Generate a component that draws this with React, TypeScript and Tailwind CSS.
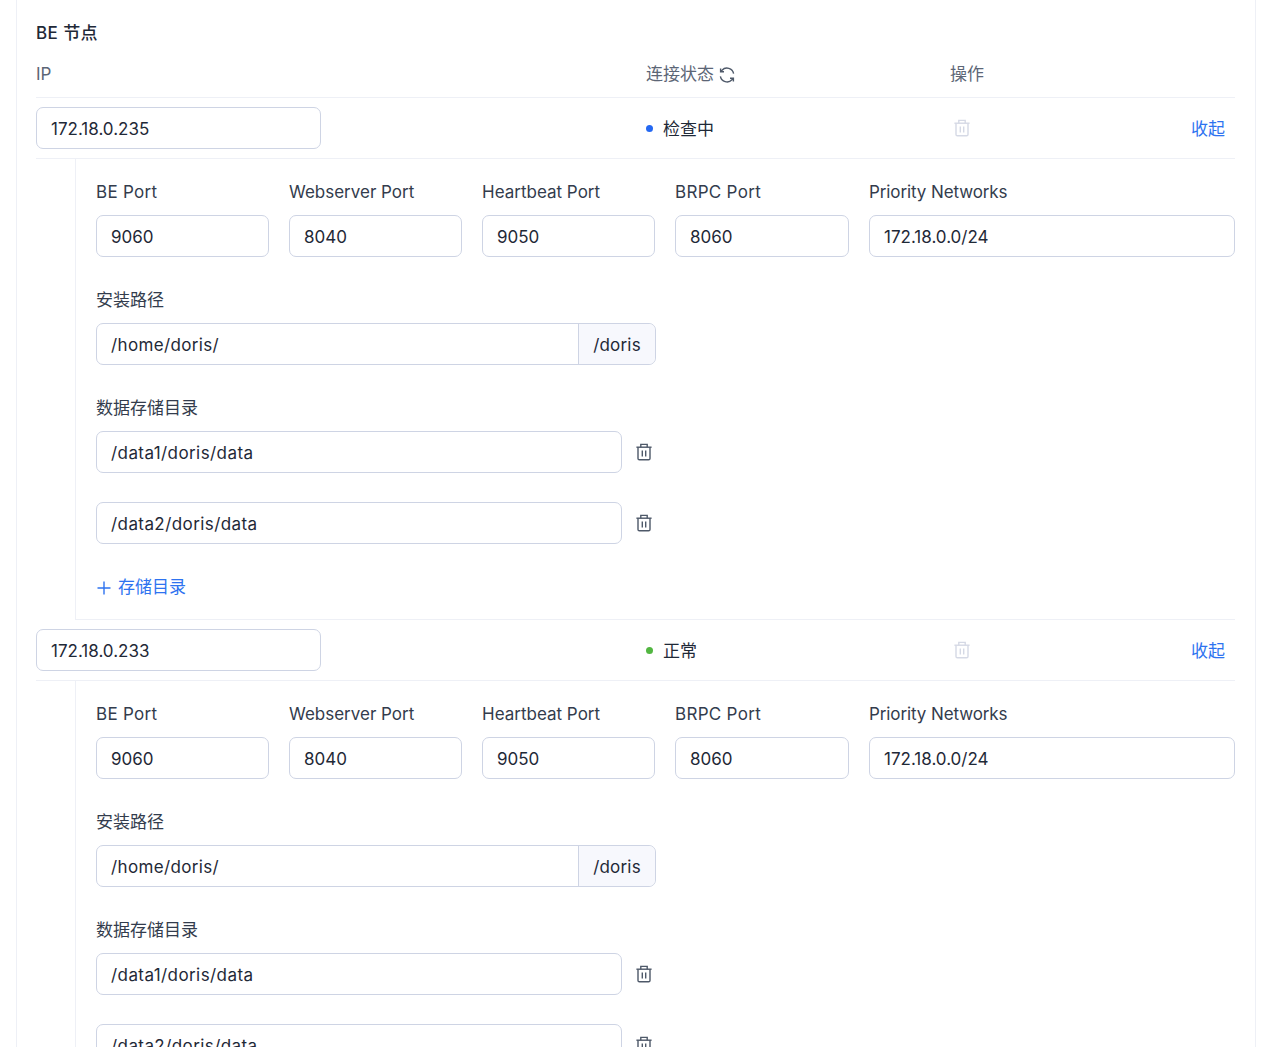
const fontStack = { fontFamily: 'Inter, "Noto Sans CJK SC", sans-serif' }

function TrashIcon({ className }: { className: string }) {
  return (
    <svg viewBox="0 0 16 18" fill="none" stroke="currentColor" strokeWidth="1.4" className={className}>
      <path d="M0.4 4.2h15.2" />
      <path d="M4.8 4.2V1.4h6.4v2.8" />
      <path d="M2 4.2v11.2c0 .9.5 1.4 1.4 1.4h9.2c.9 0 1.4-.5 1.4-1.4V4.2" />
      <path d="M6.3 7.6v5.8M9.7 7.6v5.8" />
    </svg>
  )
}

function RefreshIcon() {
  return (
    <svg viewBox="0 0 16 16" fill="none" stroke="currentColor" strokeWidth="1.4" className="h-4 w-4 text-[#4e5969]">
      <path d="M14.6 6.6A6.8 6.8 0 0 0 3 3.2L1.6 4.6" />
      <path d="M1.6 1.4v3.4h3.4" />
      <path d="M1.4 9.4A6.8 6.8 0 0 0 13 12.8l1.4-1.4" />
      <path d="M14.4 14.6v-3.4H11" />
    </svg>
  )
}

function Field({ value, className = '' }: { value: string; className?: string }) {
  return (
    <div className={`flex h-[42px] items-center rounded-[7px] border border-[#ced4e4] bg-white px-3.5 pt-[3px] text-[17px] text-[#1f2937] ${className}`}>
      {value}
    </div>
  )
}

function Label({ children, className = '' }: { children: string; className?: string }) {
  return <div className={`mb-[11px] h-[24px] text-[17px] leading-[25px] text-[#333c4d] ${className}`}>{children}</div>
}

function DataDir({ value }: { value: string }) {
  return (
    <div className="flex items-center">
      <Field value={value} className="w-[526px] tracking-[0.42px]" />
      <TrashIcon className="ml-[14px] h-[18px] w-4 text-[#4e5969]" />
    </div>
  )
}

function NodeRow({ ip, status, dot }: { ip: string; status: string; dot: string }) {
  return (
    <>
      <div className="grid grid-cols-[610px_304px_1fr] items-center border-b border-[#eef0f6] py-[9px]">
        <Field value={ip} className="w-[285px]" />
        <div className="flex items-center text-[17px] text-[#1f2937]">
          <span className={`mr-[10px] h-[7px] w-[7px] rounded-full ${dot}`} />
          <span className="pt-[3px]">{status}</span>
        </div>
        <div className="flex items-center justify-between pr-[10px]">
          <TrashIcon className="ml-[4px] h-[18px] w-4 text-[#d5d9e5]" />
          <span className="pt-[3px] text-[17px] text-[#2e73f0]">收起</span>
        </div>
      </div>
      <div className="ml-[39px] border-b border-l border-[#eef0f6] pl-5 pt-[21px]">
        <div className="grid grid-cols-[173px_173px_173px_174px_1fr] gap-x-5">
          {[
            ['BE Port', '9060', 'tracking-[0.3px]'],
            ['Webserver Port', '8040', ''],
            ['Heartbeat Port', '9050', ''],
            ['BRPC Port', '8060', 'tracking-[0.3px]'],
            ['Priority Networks', '172.18.0.0/24', 'tracking-[-0.1px]'],
          ].map(([label, value, tracking]) => (
            <div key={label}>
              <Label className={tracking}>{label}</Label>
              <Field value={value} />
            </div>
          ))}
        </div>
        <div className="mt-[31px]">
          <Label>安装路径</Label>
          <div className="flex h-[42px] w-[560px] rounded-[7px] border border-[#ced4e4] text-[17px] text-[#1f2937]">
            <div className="flex flex-1 items-center px-3.5 pt-[3px] tracking-[0.35px]">/home/doris/</div>
            <div className="flex w-[77px] items-center justify-center rounded-r-[7px] border-l border-[#ced4e4] bg-[#f7f8fd] pt-[3px] tracking-[0.2px]">/doris</div>
          </div>
        </div>
        <div className="mt-[31px]">
          <Label>数据存储目录</Label>
          <div className="flex flex-col gap-[29px]">
            <DataDir value="/data1/doris/data" />
            <DataDir value="/data2/doris/data" />
          </div>
          <div className="mt-[31px] flex h-[24px] items-center pt-[2px] text-[17px] text-[#2e73f0]">
            <svg viewBox="0 0 16 16" fill="none" stroke="currentColor" strokeWidth="1.4" className="mr-[6px] h-4 w-4">
              <path d="M8 1.5v13M1.5 8h13" />
            </svg>
            存储目录
          </div>
        </div>
        <div className="h-[20px]" />
      </div>
    </>
  )
}

export default function App() {
  return (
    <div className="h-screen overflow-hidden bg-white" style={fontStack}>
      <div className="ml-4 h-full w-[1240px] border-x border-[#eef0f6] pl-[19px] pr-5 pt-[21px]">
        <div className="h-[24px] text-[17px] leading-[24px] font-medium tracking-[0.4px] text-[#1f2937]">BE 节点</div>
        <div className="mt-[6px] grid h-[47px] grid-cols-[610px_304px_1fr] items-center border-b border-[#eef0f6] pt-[1px] text-[17px] text-[#5c6676]">
          <div>IP</div>
          <div className="flex items-center gap-[5px]">
            连接状态
            <RefreshIcon />
          </div>
          <div>操作</div>
        </div>
        <NodeRow ip="172.18.0.235" status="检查中" dot="bg-[#2468f2]" />
        <NodeRow ip="172.18.0.233" status="正常" dot="bg-[#52b641]" />
      </div>
    </div>
  )
}
